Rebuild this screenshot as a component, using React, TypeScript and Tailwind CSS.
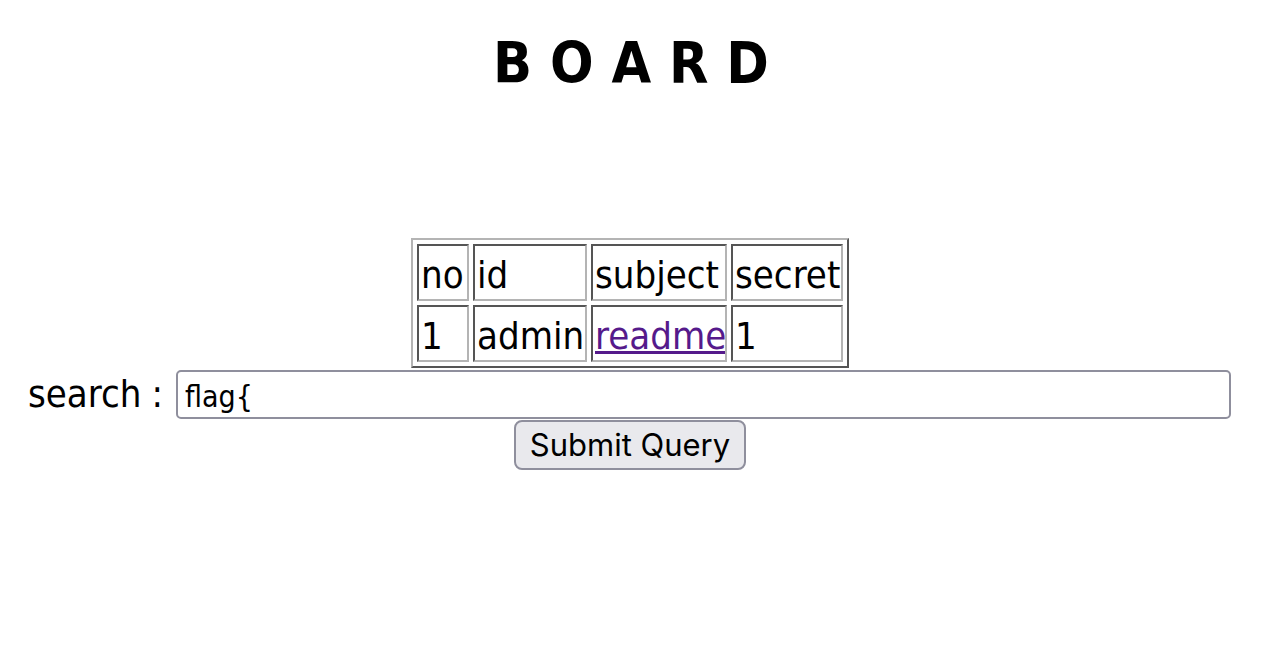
const rows = [
  ["no", "id", "subject", "secret"],
  ["1", "admin", "readme", "1"],
];

const widths = ["w-[52px]", "w-[114px]", "w-[136px]", "w-[112px]"];

const Cell = ({ children, w }: { children: React.ReactNode; w: string }) => (
  <td
    className={`${w} h-[57px] border-2 border-t-[#555] border-l-[#555] border-b-[#b4b4b4] border-r-[#b4b4b4] pl-[2px] pr-0 pt-[6px] pb-0 leading-[46px] align-top whitespace-nowrap overflow-hidden`}
  >
    {children}
  </td>
);

export default function App() {
  return (
    <div className="w-[1264px] min-h-[658px] bg-white text-black font-[DejaVu_Sans_Condensed,DejaVu_Sans,sans-serif] [font-stretch:condensed]">
      <h1 className="pt-[34px] pr-[2px] text-center text-[57px] leading-[58px] font-bold whitespace-pre">
        B O A R D
      </h1>

      <div className="mt-[146px] flex justify-center pr-[4px]">
        <table className="border-separate border-spacing-[4px] border-2 border-t-[#b4b4b4] border-l-[#b4b4b4] border-b-[#555] border-r-[#555] text-[38px] table-fixed w-[438px]">
          <tbody>
            {rows.map((row, r) => (
              <tr key={r}>
                {row.map((text, c) => (
                  <Cell key={c} w={widths[c]}>
                    {r === 1 && c === 2 ? (
                      <a href="#" className="text-[#551a8b] underline">
                        {text}
                      </a>
                    ) : (
                      text
                    )}
                  </Cell>
                ))}
              </tr>
            ))}
          </tbody>
        </table>
      </div>

      <div className="mt-[2px] flex items-center pl-[28px]">
        <span className="w-[148px] shrink-0 flex text-[38px] leading-[49px] whitespace-nowrap">
          <span>search</span>
          <span className="ml-[10px]">:</span>
        </span>
        <input
          defaultValue="flag{"
          className="w-[1055px] h-[49px] shrink-0 border-2 border-[#8f8f9d] rounded-[5px] pl-[7px] pt-[3px] text-[30px] outline-none"
        />
      </div>

      <div className="mt-[1px] flex justify-center pr-[4px]">
        <button className="w-[232px] h-[50px] bg-[#e9e9ed] border-2 border-[#8f8f9d] rounded-[8px] text-[31px] font-[Inter,sans-serif] [font-stretch:normal]">
          Submit Query
        </button>
      </div>
    </div>
  );
}
